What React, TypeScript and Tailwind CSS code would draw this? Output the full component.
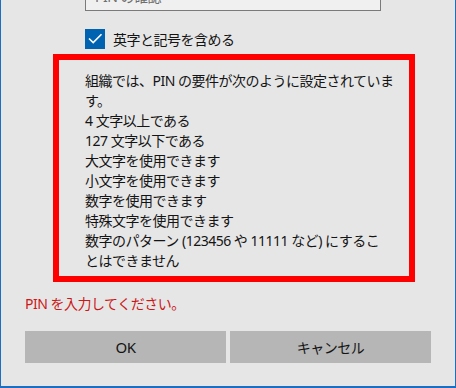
import React from "react";

const lines = [
  "組織では、PIN の要件が次のように設定されていま",
  "す。",
  "4 文字以上である",
  "127 文字以下である",
  "大文字を使用できます",
  "小文字を使用できます",
  "数字を使用できます",
  "特殊文字を使用できます",
  "数字のパターン (123456 や 11111 など) にするこ",
  "とはできません",
];

export default function App() {
  return (
    <div
      className="w-[456px] h-[388px] overflow-hidden bg-[#e6e6e6] border-l border-r border-b-2 border-[#1b6ec2] text-[14px] text-[#141414] tracking-[-0.5px]"
      style={{ fontFamily: '"Segoe UI","Noto Sans","Noto Sans CJK JP",sans-serif' }}
    >
      <div className="ml-[84px] -mt-[17px] w-[296px] h-[28px] border border-[#7a7a7a] bg-[#f0f0f0] flex items-center px-[9px] text-[#6d6d6d] leading-[20px]">
        PIN の確認
      </div>

      <div className="ml-[84px] mt-[18px] flex items-center h-[20px] gap-[8px]">
        <div className="w-[20px] h-[20px] bg-[#0063b1] flex items-center justify-center">
          <svg width="20" height="20" viewBox="0 0 20 20">
            <polyline points="4,9.5 8.2,13.6 16.5,5.2" fill="none" stroke="#ffffff" strokeWidth="1.6" />
          </svg>
        </div>
        <span className="leading-[20px] pt-[1px]">英字と記号を含める</span>
      </div>

      <div className="ml-[52px] mt-[5px] w-[362px] h-[228px] border-[6px] border-[#ff0000] pl-[26px] pt-[11px]">
        {lines.map((l, i) => (
          <div key={i} className="leading-[20px] whitespace-nowrap">
            {l}
          </div>
        ))}
      </div>

      <div className="ml-[24px] mt-[12px] leading-[20px] text-[#cc1717]">PIN を入力してください。</div>

      <div className="ml-[24px] mt-[17px] w-[406px] flex gap-[4px]">
        <div className="flex-1 h-[32px] bg-[#b6b6b6] flex items-center justify-center text-[15px]">OK</div>
        <div className="flex-1 h-[32px] bg-[#b6b6b6] flex items-center justify-center">キャンセル</div>
      </div>
    </div>
  );
}
